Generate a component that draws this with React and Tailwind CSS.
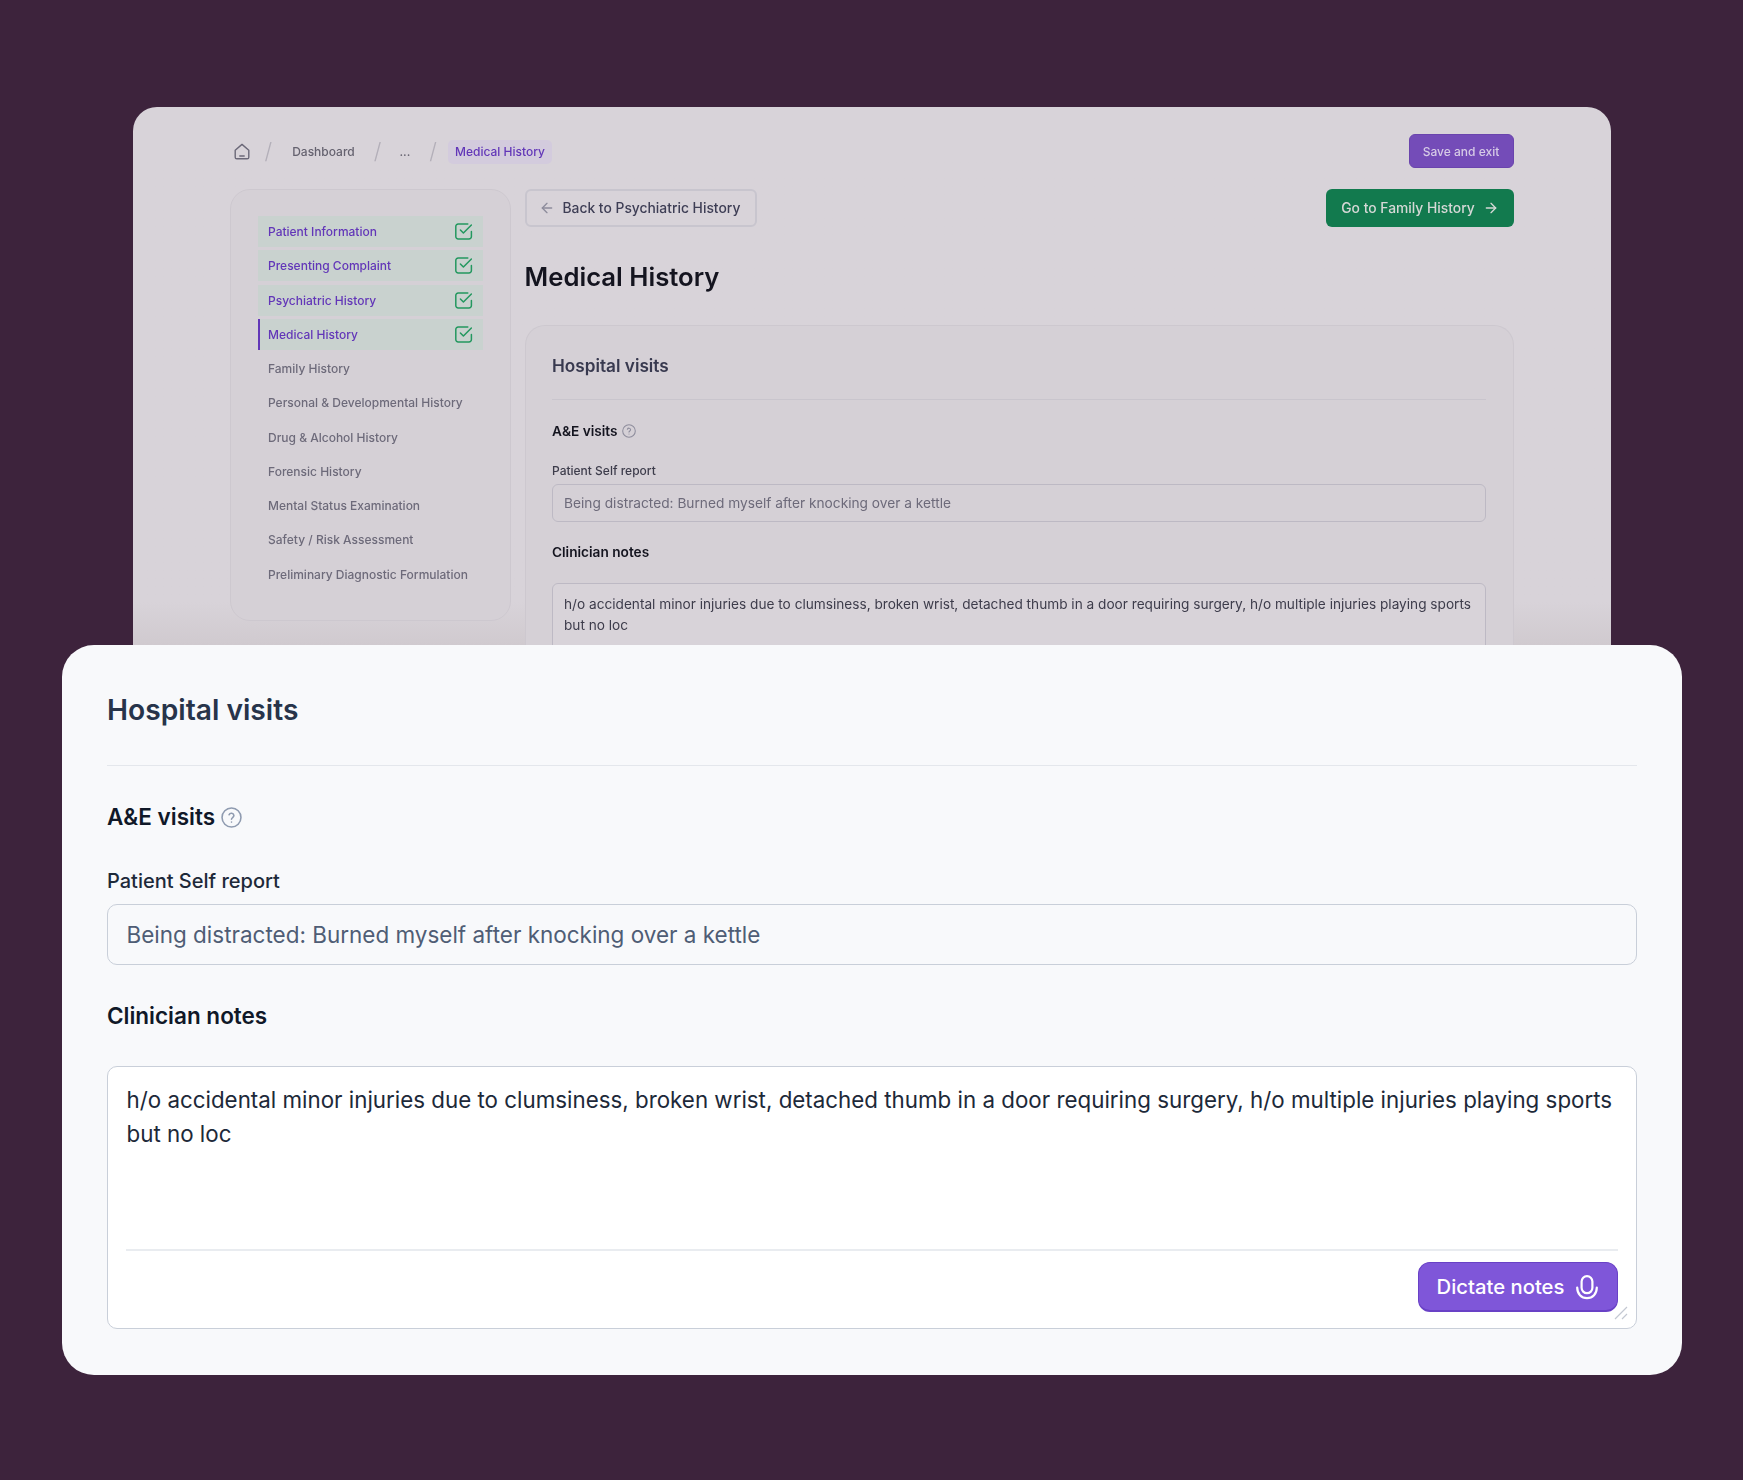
import { ArrowLeft, ArrowRight } from 'lucide-react'

const STEPS = [
  { label: 'Patient Information', done: true },
  { label: 'Presenting Complaint', done: true },
  { label: 'Psychiatric History', done: true },
  { label: 'Medical History', done: true, active: true },
  { label: 'Family History' },
  { label: 'Personal & Developmental History' },
  { label: 'Drug & Alcohol History' },
  { label: 'Forensic History' },
  { label: 'Mental Status Examination' },
  { label: 'Safety / Risk Assessment' },
  { label: 'Preliminary Diagnostic Formulation' },
]

const NOTE = 'h/o accidental minor injuries due to clumsiness, broken wrist, detached thumb in a door requiring surgery, h/o multiple injuries playing sports but no loc'

function HomeIcon() {
  return (
    <svg width="16" height="17" viewBox="0 0 16 17" fill="none" stroke="#6b6878" strokeWidth="1.4" strokeLinecap="round" strokeLinejoin="round">
      <path d="M1.2 7.2 8 1.4l6.8 5.8v7a1.6 1.6 0 0 1-1.6 1.6H2.8a1.6 1.6 0 0 1-1.6-1.6z" />
      <path d="M5.8 13h4.4" />
    </svg>
  )
}

function CheckBox() {
  return (
    <svg width="18" height="17" viewBox="0 0 18 17" fill="none" stroke="#23985f" strokeWidth="1.5" strokeLinecap="round" strokeLinejoin="round">
      <path d="M16.4 8.5v5a2.4 2.4 0 0 1-2.4 2.4H3.2a2.4 2.4 0 0 1-2.4-2.4V3.4A2.4 2.4 0 0 1 3.2 1h9.6" />
      <path d="m5.4 7 3 3 8-8" />
    </svg>
  )
}

function HelpIcon({ size, color }) {
  return (
    <svg width={size} height={size} viewBox="0 0 20 20" fill="none" stroke={color} strokeWidth="1.5" strokeLinecap="round" strokeLinejoin="round">
      <circle cx="10" cy="10" r="9" />
      <path d="M7.7 7.4a2.4 2.4 0 0 1 4.6.8c0 1.6-2.3 2-2.3 3.4" />
      <path d="M10 14.4h.01" />
    </svg>
  )
}

function MicIcon() {
  return (
    <svg width="22" height="25" viewBox="0 0 22 25" fill="none" stroke="#ffffff" strokeWidth="2.2" strokeLinecap="round" strokeLinejoin="round">
      <rect x="5.6" y="1.2" width="10.8" height="17" rx="5.4" />
      <path d="M1.2 12.6c0 6.4 4.2 10.6 9.8 10.6s9.8-4.2 9.8-10.6" />
    </svg>
  )
}

function Slash() {
  return <span className="text-[#b3afb9] text-[22px] font-light leading-none">/</span>
}

function Breadcrumb() {
  return (
    <div className="flex items-center justify-between h-[34px]">
      <div className="flex items-center pl-[4px] text-[12px] font-medium text-[#65626f]">
        <span className="mr-[15px] flex"><HomeIcon /></span>
        <Slash />
        <span className="ml-[20px] mr-[19px] mt-[1px]">Dashboard</span>
        <Slash />
        <span className="ml-[18px] mr-[19px] mt-[1px]">...</span>
        <Slash />
        <span className="ml-[11px] mt-[1px] px-[7px] h-[24px] flex items-center rounded-[5px] bg-[#d3cbdd] text-[#6236b8]">Medical History</span>
      </div>
      <button className="h-[34px] w-[105px] pt-[1px] rounded-[6px] bg-[#744cb8] border border-[#6a44ad] text-[12px] font-medium text-[#d6cbe6]">Save and exit</button>
    </div>
  )
}

function StepList() {
  return (
    <aside className="w-[281px] h-[432px] shrink-0 rounded-[20px] bg-[#d5d0d6] border border-[#cdc8cf] px-[27px] pt-[26px] flex flex-col gap-[3.25px]">
      {STEPS.map((s) => (
        <div
          key={s.label}
          className={`h-[31px] shrink-0 flex items-center justify-between pr-[10px] text-[12px] font-medium whitespace-nowrap ${s.done ? 'bg-[#c9d2cf] text-[#6236b8]' : 'text-[#6d6a7a]'} ${s.active ? 'border-l-2 border-[#6236b8] pl-[8.5px]' : 'pl-[10.5px]'}`}
        >
          <span className="mt-[1px] leading-none">{s.label}</span>
          {s.done && <CheckBox />}
        </div>
      ))}
    </aside>
  )
}

function MiniForm() {
  return (
    <div className="mt-[31px] rounded-t-[20px] border border-b-0 border-[#cdc8cf] bg-[#d5d0d6] px-[26.5px] pt-[27px] h-[400px]">
      <h3 className="text-[17.2px] leading-[26px] font-semibold text-[#38394f]">Hospital visits</h3>
      <div className="mt-[20px] border-t border-[#c9c5cd]" />
      <div className="mt-[21px] flex items-center gap-[4px] text-[13.65px] leading-[20px] font-semibold text-[#14141f]">
        A&amp;E visits <HelpIcon size={14} color="#8d8c9c" />
      </div>
      <p className="mt-[21px] text-[12px] leading-[18px] font-medium text-[#3d3c4b]">Patient Self report</p>
      <div className="mt-[4px] h-[38px] flex items-center px-[11px] rounded-[6px] border border-[#bdb9c4] text-[13.72px] text-[#6d6a7a]">
        Being distracted: Burned myself after knocking over a kettle
      </div>
      <p className="mt-[20px] text-[13.65px] leading-[20px] font-semibold text-[#14141f]">Clinician notes</p>
      <div className="mt-[21px] h-[90px] px-[11px] pt-[10px] rounded-t-[6px] border border-[#bdb9c4] bg-[#d8d3d9] text-[13.65px] leading-[20.5px] text-[#3d3c4b]">
        {NOTE}
      </div>
    </div>
  )
}

function BackCard() {
  return (
    <div className="w-[1478px] h-[538px] overflow-hidden rounded-t-[24px] bg-gradient-to-b from-[#d8d3d9] from-[92%] to-[#d0cacf] px-[97px] pt-[27px] blur-[0.3px]">
      <Breadcrumb />
      <div className="mt-[21px] flex gap-[14px]">
        <StepList />
        <div className="flex-1 min-w-0">
          <div className="flex items-center justify-between">
            <button className="h-[38px] w-[232px] flex items-center gap-[8px] pl-[12px] rounded-[6px] border-2 border-[#c8c5ce] text-[13.85px] font-medium text-[#3e3e55] whitespace-nowrap">
              <ArrowLeft size={16} color="#8d8c9c" /> Back to Psychiatric History
            </button>
            <button className="h-[38px] w-[188px] flex items-center justify-center gap-[8px] pl-[1px] rounded-[6px] bg-[#127a4e] text-[13.85px] font-medium text-[#d5d8d6] whitespace-nowrap">
              Go to Family History <ArrowRight size={16} />
            </button>
          </div>
          <h1 className="mt-[33px] text-[25.7px] leading-[34px] font-semibold text-[#14141f]">Medical History</h1>
          <MiniForm />
        </div>
      </div>
    </div>
  )
}

function FrontCard() {
  return (
    <div className="w-[1620px] h-[730px] rounded-[32px] bg-[#f8f9fb] px-[45px] pt-[45px]">
      <h2 className="pl-[0.5px] text-[28.2px] leading-[40px] font-semibold text-[#27344a]">Hospital visits</h2>
      <div className="mt-[35px] border-t border-[#e4e7ec]" />
      <div className="mt-[36px] pl-[0.5px] flex items-center gap-[6px] text-[22.5px] leading-[30px] font-semibold text-[#101828]">
        A&amp;E visits <HelpIcon size={21} color="#8f9bb0" />
      </div>
      <p className="mt-[35px] pl-[0.5px] text-[20px] leading-[28px] font-medium text-[#1d2939]">Patient Self report</p>
      <div className="mt-[9px] h-[61px] flex items-center px-[19px] rounded-[10px] border-[1.5px] border-[#c9cfd9] text-[22.47px] text-[#4f5d75]">
        Being distracted: Burned myself after knocking over a kettle
      </div>
      <p className="mt-[36px] pl-[0.5px] text-[22.5px] leading-[30px] font-semibold text-[#101828]">Clinician notes</p>
      <div className="relative mt-[35px] h-[263px] rounded-[10px] border-[1.5px] border-[#c9cfd9] bg-white px-[18px] pt-[16px]">
        <div className="h-[168px] pl-[1px] border-b-2 border-[#e9ecf0] text-[22.35px] leading-[33.5px] text-[#1d2939]">{NOTE}</div>
        <div className="mt-[11px] flex justify-end">
          <button className="h-[50px] w-[200px] pt-[1px] flex items-center justify-center gap-[12px] rounded-[12px] bg-[#7f56d9] border border-[#6941c6] border-b-2 text-[20.25px] font-medium text-white whitespace-nowrap">
            Dictate notes <MicIcon />
          </button>
        </div>
        <svg className="absolute right-[8px] bottom-[8px]" width="14" height="14" viewBox="0 0 14 14" stroke="#c3c8d2" strokeWidth="1.2" fill="none">
          <path d="M1 13 13 1M8 13l5-5" />
        </svg>
      </div>
    </div>
  )
}

export default function App() {
  return (
    <div className="min-h-[1480px] bg-[#3d233c] flex flex-col items-center pt-[107px] font-['Inter',sans-serif]">
      <BackCard />
      <FrontCard />
    </div>
  )
}
